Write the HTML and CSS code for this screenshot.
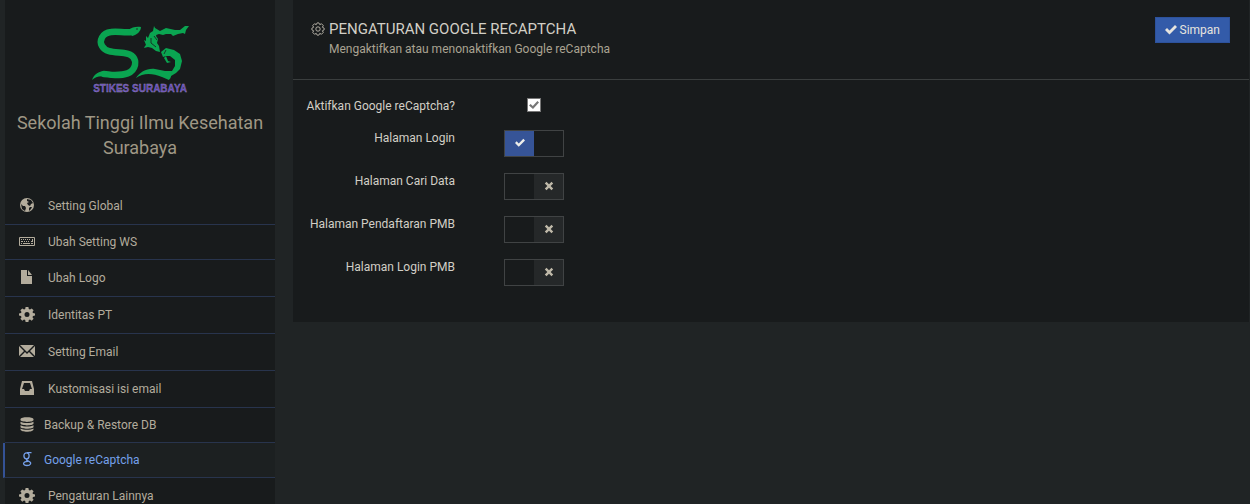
FILE: index.html
```html
<!DOCTYPE html>
<html lang="id">
<head>
<meta charset="utf-8">
<title>Pengaturan Google reCaptcha</title>
<link rel="stylesheet" href="styles.css">
</head>
<body>
<div class="layout">
  <aside class="sidebar">
    <div class="brand">
      <svg class="logo" viewBox="0 0 100 70" role="img" aria-label="STIKES SURABAYA">
        <path fill="none" stroke="#0aa551" stroke-width="6.500" stroke-linecap="round" stroke-linejoin="round" d="M42 7C34 8 28 6 21 7C12 8 9 16 12 21C16 28 25 27 34 28C43 29 46 34 45 40C43 49 34 50 25 50C20 50 17 49 14 49"/>
        <g fill="#0aa551">
          <path d="M38 5C42 2 47 1 51 2C51 6 47 10 42 11Z"/>
          <path d="M2 55C4 49 9 46 16 46L22 53C12 50 6 51 2 55Z"/>
          <path d="M56 20L54 15L56 16L56 11L58 13L60 8L63 6L64 1L67 7L66 11L68 14L67 18L69 21L70 27L66 26L62 23L58 22L54 23L55 21Z"/>
          <path d="M65 3L70 6L76 3L85 5L90 5L95 1L99 1L96 5L95 9L93 8L88 9L83 11L81 9L76 9L73 10L69 9L66 10Z"/>
          <path d="M71 27L76 23L84 25L90 29L92 36L90 44L86 48L81 51L80 54L77 53L77 48L82 46L85 41L85 35L80 31L76 31L73 32Z"/>
          <path d="M76 31L78 36L81 37L77 38L74 33Z"/>
          <path d="M46 53C50 47 57 43 65 44L75 46L82 46L81 51L79 55L72 52C62 48 53 48 46 53Z"/>
        </g>
        <path fill="none" stroke="#181b1c" stroke-width="0.800" d="M61 13L61 18L66 22M67 15L64 11M46 4L48 4M76 25L74 29"/>
        <text x="50" y="67" text-anchor="middle" class="logo-text">STIKES SURABAYA</text>
      </svg>
      <h1 class="school">Sekolah Tinggi Ilmu Kesehatan Surabaya</h1>
    </div>
    <nav class="menu">
      <a class="item" href="#"><svg class="icon" viewBox="0 0 16 16"><circle cx="8" cy="7" r="7"/><path class="cut" d="M8 1L12 2L14 5L12 6L11 8L9 7L8 5L10 4L8 3ZM2 6L4 8L6 8L7 10L6 13L3 11ZM11 9L13 9L12 11L10 13L10 10Z"/></svg><span>Setting Global</span></a>
      <a class="item short" href="#"><svg class="icon" viewBox="0 0 16 16"><path fill-rule="evenodd" d="M1 3H15Q16 3 16 4V11Q16 12 15 12H1Q0 12 0 11V4Q0 3 1 3ZM1 4V11H15V4Z"/><path d="M2 5h1v1H2zM4 5h1v1H4zM6 5h1v1H6zM8 5h1v1H8zM10 5h1v1h-1zM13 5h1v3h-2V7h1zM2 7h2v1H2zM5 7h1v1H5zM7 7h1v1H7zM9 7h1v1H9zM2 9h1v1H2zM4 9h7v1H4zM12 9h2v1h-2z"/></svg><span>Ubah Setting WS</span></a>
      <a class="item" href="#"><svg class="icon" viewBox="0 0 16 16"><path d="M2 0H8V6H13V14H2ZM9 0L13 5H9Z"/></svg><span>Ubah Logo</span></a>
      <a class="item" href="#"><svg class="icon" viewBox="0 0 16 16"><use href="#gear"/></svg><span>Identitas PT</span></a>
      <a class="item" href="#"><svg class="icon" viewBox="0 0 16 16"><path d="M1 1H15L8 8ZM0 2L5 7L0 12ZM16 2L11 7L16 12ZM1 13L6 8L8 10L10 8L15 13Z"/></svg><span>Setting Email</span></a>
      <a class="item" href="#"><svg class="icon" viewBox="0 0 16 16"><path fill-rule="evenodd" d="M3 0H13L15 8V14H1V8ZM5 2L3 8H5L6 10H10L11 8H13L11 2Z"/></svg><span>Kustomisasi isi email</span></a>
      <a class="item short near" href="#"><svg class="icon" viewBox="0 0 16 16"><path d="M1.500 2C2 -.5 14 -.5 14.500 2V3C14 5.500 2 5.500 1.500 3ZM1.500 4.800C4 6.500 12 6.500 14.500 4.800V6.500C14 9 2 9 1.500 6.500ZM1.500 8.200C4 10 12 10 14.500 8.200V10C14 12.300 2 12.300 1.500 10ZM1.500 11.500C4 13.300 12 13.300 14.500 11.500V12.500C14 15.500 2 15.500 1.500 12.500Z"/></svg><span>Backup &amp; Restore DB</span></a>
      <a class="item short near active" href="#" aria-current="page"><svg class="icon line" viewBox="0 0 16 16"><ellipse cx="7.500" cy="3.800" rx="2.600" ry="3"/><path d="M12.500 .7H8M9.500 6.300C6.500 7.300 7 8 9 8.800C14 11 11 13.500 8 13.500C3.500 13.500 3 9.500 9 9.300"/></svg><span>Google reCaptcha</span></a>
      <a class="item" href="#"><svg class="icon" viewBox="0 0 16 16"><use href="#gear"/></svg><span>Pengaturan Lainnya</span></a>
    </nav>
  </aside>

  <main class="panel">
    <header class="panel-head">
      <svg class="head-icon" viewBox="0 0 16 16"><path d="M7 1H9L10 3L12 2L14 4L13 6L15 7V9L13 10L14 12L12 14L10 13L9 15H7L6 13L4 14L2 12L3 10L1 9V7L3 6L2 4L4 2L6 3Z"/><circle cx="8" cy="8" r="2.500"/></svg>
      <div class="heading">
        <h2 class="title">PENGATURAN GOOGLE RECAPTCHA</h2>
        <p class="subtitle">Mengaktifkan atau menonaktifkan Google reCaptcha</p>
      </div>
      <button class="save" type="submit" form="settings"><svg class="save-icon" viewBox="0 0 12 12"><use href="#check"/></svg>Simpan</button>
    </header>
    <form class="settings" id="settings">
      <div class="row first"><label class="label" for="enable">Aktifkan Google reCaptcha?</label><span class="field center"><input class="tick" type="checkbox" id="enable" checked></span></div>
      <div class="row"><label class="label" for="login">Halaman Login</label><span class="field switch"><input class="toggle" type="checkbox" id="login" checked><svg class="mark on" viewBox="0 0 12 12"><use href="#check"/></svg><svg class="mark off" viewBox="0 0 12 12"><use href="#cross"/></svg></span></div>
      <div class="row"><label class="label" for="cari">Halaman Cari Data</label><span class="field switch"><input class="toggle" type="checkbox" id="cari"><svg class="mark on" viewBox="0 0 12 12"><use href="#check"/></svg><svg class="mark off" viewBox="0 0 12 12"><use href="#cross"/></svg></span></div>
      <div class="row"><label class="label" for="daftar">Halaman Pendaftaran PMB</label><span class="field switch"><input class="toggle" type="checkbox" id="daftar"><svg class="mark on" viewBox="0 0 12 12"><use href="#check"/></svg><svg class="mark off" viewBox="0 0 12 12"><use href="#cross"/></svg></span></div>
      <div class="row"><label class="label" for="pmb">Halaman Login PMB</label><span class="field switch"><input class="toggle" type="checkbox" id="pmb"><svg class="mark on" viewBox="0 0 12 12"><use href="#check"/></svg><svg class="mark off" viewBox="0 0 12 12"><use href="#cross"/></svg></span></div>
    </form>
  </main>
</div>
<svg class="defs" aria-hidden="true">
  <symbol id="gear" viewBox="0 0 16 16"><path fill-rule="evenodd" d="M6.600 0H9.400L9.800 2L11 2.500L12.700 1.400L14.600 3.300L13.500 5L14 6L16 6.500V8.500L14 9L13.500 10.200L14.600 11.800L12.700 13.700L11 12.600L9.800 13L9.400 15H6.600L6.200 13L5 12.600L3.300 13.700L1.400 11.800L2.500 10.200L2 9L0 8.500V6.500L2 6L2.500 5L1.400 3.300L3.300 1.400L5 2.500L6.200 2ZM8 5A2.500 2.500 0 1 0 8 10A2.500 2.500 0 1 0 8 5Z"/></symbol>
  <symbol id="check" viewBox="0 0 12 12"><path d="M0 6L2 4L4.500 6.500L10 1L12 3L4.500 10.500Z"/></symbol>
  <symbol id="cross" viewBox="0 0 12 12"><path d="M3 1L6 4L9 1L11 3L8 6L11 9L9 11L6 8L3 11L1 9L4 6L1 3Z"/></symbol>
</svg>
</body>
</html>
```
FILE: styles.css
```css
* { box-sizing: border-box; }
body {
  margin: 0;
  background: #202425;
  color: #d2cfc6;
  font: 12px/18px Roboto, sans-serif;
}
.defs { display: none; }
.layout {
  display: flex;
  align-items: flex-start;
  gap: 18px;
  height: 100vh;
  padding: 0 1px 0 5px;
  overflow: hidden;
}
.sidebar {
  flex: 0 0 270px;
  min-height: 100%;
  background: #181b1c;
  color: #b3ac9c;
}
.brand {
  padding: 25px 8px 28px;
  text-align: center;
}
.logo { display: block; width: 100px; height: 70px; margin: 0 auto 15px; }
.logo-text {
  font: bold 10px "Liberation Sans", sans-serif;
  fill: #6444c0;
  stroke: #9a94b0;
  stroke-width: 0.3px;
}
.school {
  margin: 0;
  color: #9f9785;
  font-size: 18px;
  font-weight: 400;
  line-height: 25px;
}
.item {
  display: flex;
  align-items: center;
  gap: 13px;
  height: 37px;
  padding-left: 14px;
  border-bottom: 1px solid #28344d;
  color: inherit;
  text-decoration: none;
}
.short { height: 35px; }
.near { gap: 9px; }
.active {
  margin-left: -2px;
  border-left: 2px solid #345296;
  background: #1c2021;
  background-clip: padding-box;
  color: #75a0ea;
}
.icon { width: 16px; height: 16px; fill: currentColor; }
.icon .cut { fill: #181b1c; }
.icon.line { fill: none; stroke: currentColor; stroke-width: 1.3px; }
.panel {
  flex: 1;
  min-width: 0;
  padding-bottom: 20px;
  background: #181b1c;
}
.panel-head {
  display: flex;
  align-items: flex-start;
  gap: 4px;
  min-height: 80px;
  padding: 17px 19px 17px 18px;
  border-bottom: 1px solid #3a3e3e;
}
.head-icon {
  width: 14px;
  height: 14px;
  margin-top: 5px;
  fill: none;
  stroke: #c3bfb4;
}
.heading { flex: 1; }
.title { margin: 0; font-size: 15px; font-weight: 400; line-height: 24px; }
.subtitle { margin: 0; color: #aaa392; line-height: 16px; }
.save {
  display: flex;
  align-items: center;
  justify-content: center;
  gap: 3px;
  height: 26px;
  padding: 0 9px;
  border: 1px solid #2d529c;
  background: #335ba9;
  color: #e6e4df;
  font: inherit;
}
.save-icon { width: 12px; height: 12px; fill: currentColor; }
.settings { padding: 16px 0 0; }
.row {
  display: grid;
  grid-template-columns: 162px 60px;
  gap: 49px;
  min-height: 43px;
}
.first { min-height: 34px; }
.label { line-height: 16px; text-align: right; }
.first .label { line-height: 20px; }
.field { height: 27px; }
.center { display: flex; justify-content: center; align-items: flex-start; }
.tick {
  appearance: none;
  width: 14px;
  height: 14px;
  margin: 2px 0 0;
  border: 1px solid #777;
  background: #fff;
  display: grid;
  place-items: center;
}
.tick:checked::before {
  content: "";
  width: 10px;
  height: 9px;
  background: #777;
  clip-path: polygon(0 55%, 16% 38%, 38% 62%, 84% 6%, 100% 22%, 40% 95%);
}
.switch {
  display: grid;
  grid-template-columns: 1fr 1fr;
  grid-template-rows: 25px;
  align-items: center;
  justify-items: center;
  border: 1px solid #404344;
}
.toggle {
  appearance: none;
  grid-area: 1 / 2;
  align-self: stretch;
  justify-self: stretch;
  margin: 0;
  background: #252829;
}
.toggle:checked { grid-area: 1 / 1; background: #365497; }
.mark { display: none; width: 10px; height: 10px; margin-bottom: 2px; }
.on { grid-area: 1 / 1; fill: #eeeeea; }
.off { grid-area: 1 / 2; fill: #bfb9a9; }
.toggle:checked ~ .on, .toggle:not(:checked) ~ .off { display: block; z-index: 1; }
```
